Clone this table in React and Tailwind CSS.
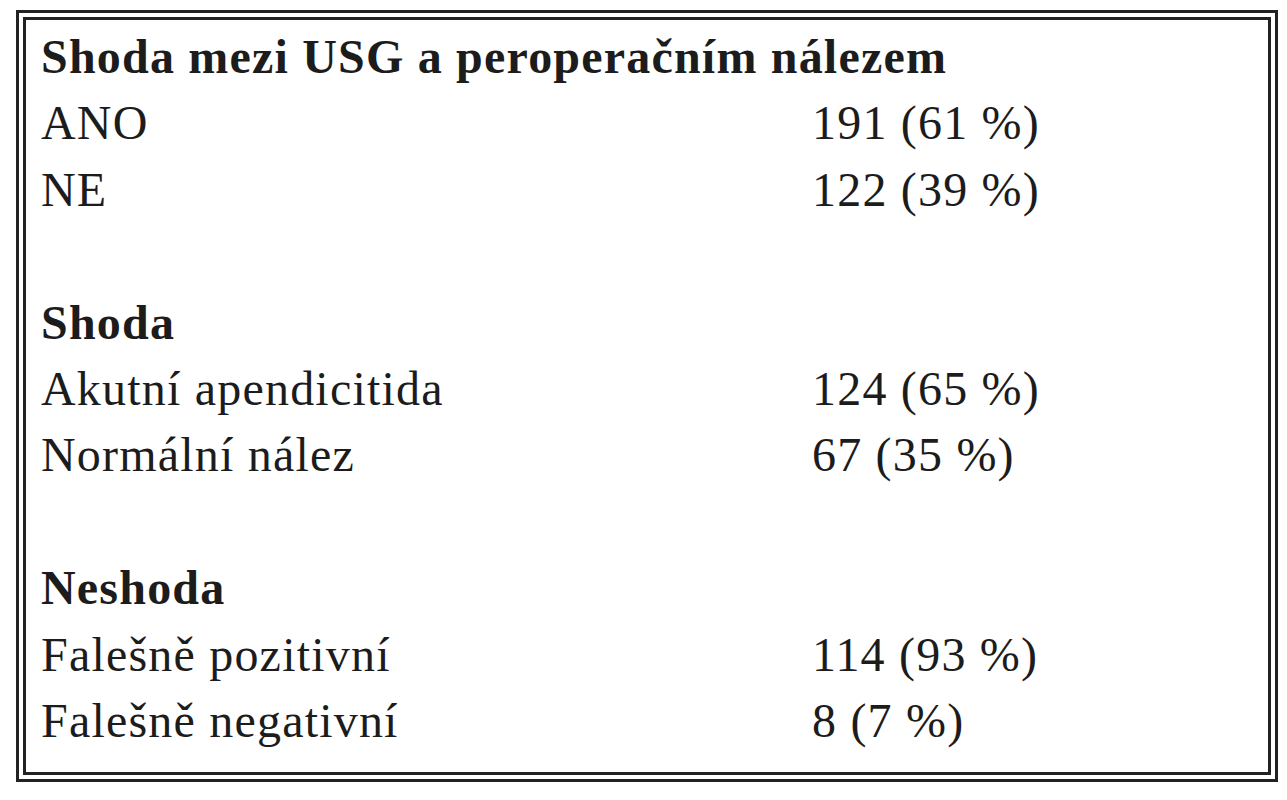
export default function App() {
  const rows = [
    { h: "Shoda mezi USG a peroperačním nálezem" },
    { a: "ANO", b: "191 (61 %)" },
    { a: "NE", b: "122 (39 %)" },
    { blank: true },
    { h: "Shoda" },
    { a: "Akutní apendicitida", b: "124 (65 %)" },
    { a: "Normální nález", b: "67 (35 %)" },
    { blank: true },
    { h: "Neshoda" },
    { a: "Falešně pozitivní", b: "114 (93 %)" },
    { a: "Falešně negativní", b: "8 (7 %)" },
  ];
  return (
    <div className="w-[1287px] h-[800px] bg-white overflow-hidden">
      <div className="ml-[16px] mt-[10px] w-[1262px] h-[772px] border-[3px] border-[#222] p-[4px]">
        <div
          className="h-full border-[3px] border-[#222] pl-[15px] pt-[4px] text-[48px] leading-[66.4px] tracking-[1.2px] text-[#1c1c1c]"
          style={{ fontFamily: '"Liberation Serif", "Times New Roman", serif' }}
        >
          {rows.map((r, i) =>
            r.h ? (
              <div key={i} className="font-bold whitespace-nowrap">{r.h}</div>
            ) : r.blank ? (
              <div key={i} className="h-[66.4px]" />
            ) : (
              <div key={i} className="grid grid-cols-[771px_1fr] whitespace-nowrap">
                <div>{r.a}</div>
                <div>{r.b}</div>
              </div>
            )
          )}
        </div>
      </div>
    </div>
  );
}
